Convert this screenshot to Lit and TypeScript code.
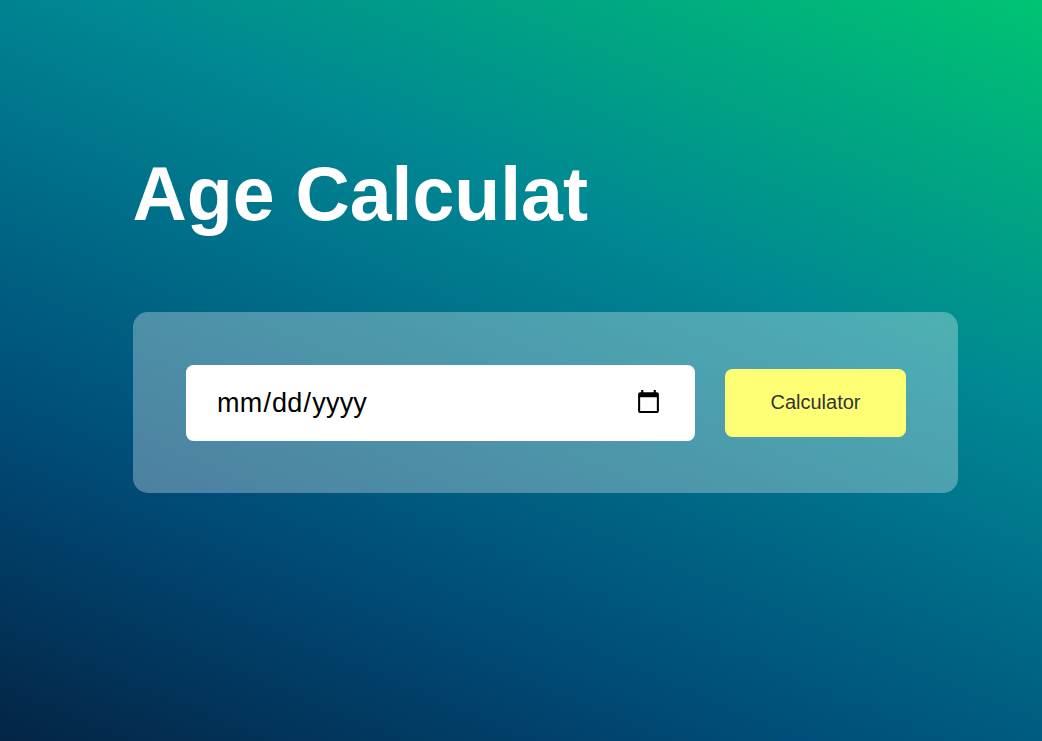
import { LitElement, html, css } from "lit";
import { customElement } from "lit/decorators.js";

@customElement("app-root")
export class AppRoot extends LitElement {
  static styles = css`
    :host {
      display: block;
      box-sizing: border-box;
      width: 100%;
      height: 100vh;
      overflow: hidden;
      padding: 151px 84px 0 133px;
      font-family: "Liberation Sans", Arial, sans-serif;
      background: linear-gradient(23deg, #051937 -84px, #004d7a 308px, #008793 708px, #00c472 1090px);
    }
    .title {
      margin: 0 0 75px -0.5px;
      color: #fff;
      font-size: 75.2px;
      line-height: 86px;
      font-weight: 700;
      white-space: nowrap;
    }
    .panel {
      display: flex;
      align-items: center;
      box-sizing: border-box;
      width: 825px;
      height: 181px;
      padding: 0 52px 0 53px;
      gap: 30px;
      border-radius: 15px;
      background: rgba(255, 255, 255, 0.3);
    }
    .date {
      box-sizing: border-box;
      width: 509px;
      height: 76px;
      margin: 0;
      padding: 0 31px 0 30px;
      border: 0;
      outline: 0;
      border-radius: 7.5px;
      background: #fff;
      color: #000;
      font: 27px "Liberation Sans", Arial, sans-serif;
      letter-spacing: 0.2px;
    }
    .date::-webkit-datetime-edit {
      padding-top: 2px;
    }
    .submit {
      box-sizing: border-box;
      width: 181px;
      height: 68px;
      margin: 0;
      padding: 0;
      border: 0;
      border-radius: 7.5px;
      background: #ffff76;
      color: #333;
      font: 20px "Liberation Sans", Arial, sans-serif;
    }
  `;

  render() {
    return html`
      <h1 class="title">Age Calculat</h1>
      <div class="panel">
        <input class="date" type="date" aria-label="Date of birth" />
        <button class="submit" type="button">Calculator</button>
      </div>
    `;
  }
}
